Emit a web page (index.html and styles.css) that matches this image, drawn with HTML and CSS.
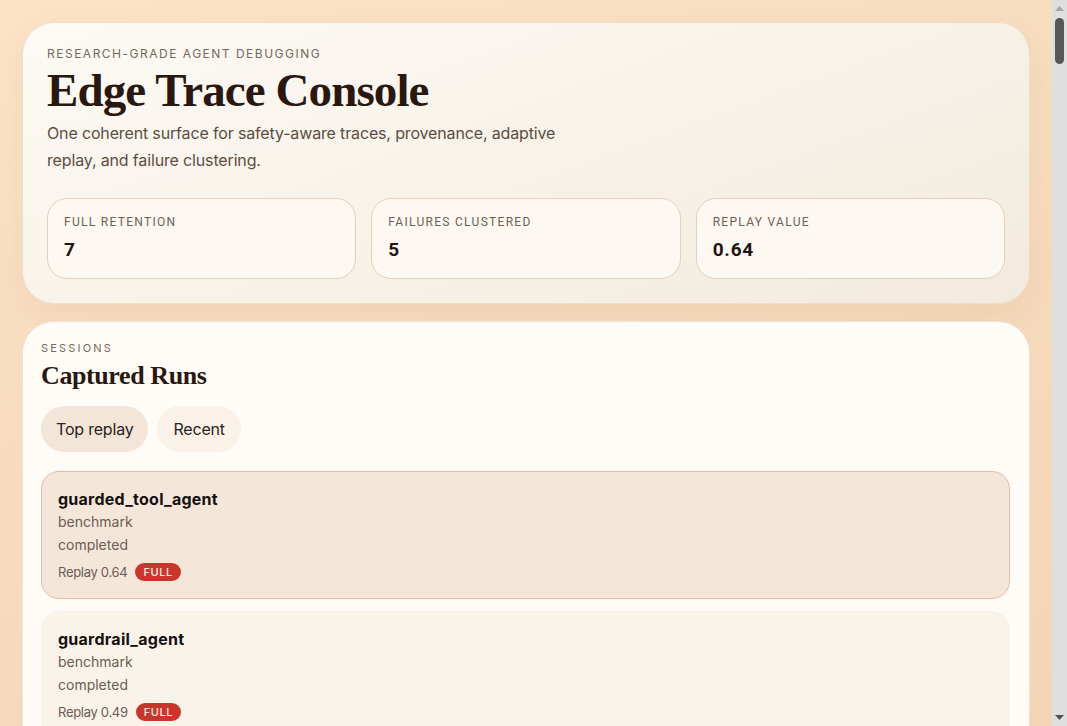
FILE: index.html
```html
<!DOCTYPE html>
<html lang="en">
<head>
<meta charset="utf-8">
<title>Edge Trace Console</title>
<link rel="stylesheet" href="styles.css">
</head>
<body>
<main class="page">
  <section class="hero">
    <p class="eyebrow">Research-grade agent debugging</p>
    <h1 class="title">Edge Trace Console</h1>
    <p class="lede">One coherent surface for safety-aware traces, provenance, adaptive replay, and failure clustering.</p>
    <div class="stats">
      <div class="stat"><span class="stat-label">Full retention</span><span class="stat-value">7</span></div>
      <div class="stat"><span class="stat-label">Failures clustered</span><span class="stat-value">5</span></div>
      <div class="stat"><span class="stat-label">Replay value</span><span class="stat-value">0.64</span></div>
    </div>
  </section>

  <section class="panel">
    <p class="eyebrow small">Sessions</p>
    <h2 class="panel-title">Captured Runs</h2>
    <div class="tabs">
      <button class="tab active">Top replay</button>
      <button class="tab">Recent</button>
    </div>
    <div class="runs">
      <article class="run selected"><h3 class="run-name">guarded_tool_agent</h3><p class="run-meta">benchmark</p><p class="run-meta">completed</p><div class="run-foot"><span>Replay 0.64</span><span class="badge">FULL</span></div></article>
      <article class="run"><h3 class="run-name">guardrail_agent</h3><p class="run-meta">benchmark</p><p class="run-meta">completed</p><div class="run-foot"><span>Replay 0.49</span><span class="badge">FULL</span></div></article>
      <article class="run"><h3 class="run-name">planner_agent</h3><p class="run-meta">benchmark</p><p class="run-meta">failed</p><div class="run-foot"><span>Replay 0.47</span><span class="badge">FULL</span></div></article>
      <article class="run"><h3 class="run-name">retrieval_agent</h3><p class="run-meta">production</p><p class="run-meta">failed</p><div class="run-foot"><span>Replay 0.45</span><span class="badge">FULL</span></div></article>
      <article class="run"><h3 class="run-name">browser_agent</h3><p class="run-meta">benchmark</p><p class="run-meta">completed</p><div class="run-foot"><span>Replay 0.44</span><span class="badge">FULL</span></div></article>
      <article class="run"><h3 class="run-name">sql_agent</h3><p class="run-meta">production</p><p class="run-meta">failed</p><div class="run-foot"><span>Replay 0.42</span><span class="badge">FULL</span></div></article>
      <article class="run"><h3 class="run-name">code_review_agent</h3><p class="run-meta">benchmark</p><p class="run-meta">failed</p><div class="run-foot"><span>Replay 0.41</span><span class="badge">FULL</span></div></article>
    </div>
  </section>
</main>
<aside class="scrollbar" aria-hidden="true">
  <div class="sb-btn">
    <svg width="9" height="5" viewBox="0 0 9 5"><path d="M0 5 L4.5 0 L9 5 Z" fill="#a3a3a3"/></svg>
  </div>
  <div class="sb-track"><div class="sb-thumb"></div></div>
  <div class="sb-btn">
    <svg width="9" height="5" viewBox="0 0 9 5"><path d="M0 0 L9 0 L4.5 5 Z" fill="#505050"/></svg>
  </div>
</aside>
</body>
</html>
```

FILE: styles.css
```css
* { box-sizing: border-box; }

html, body {
  margin: 0;
  padding: 0;
  height: 100%;
  overflow: hidden;
}

body {
  display: flex;
  background: linear-gradient(160deg, #fde3c6 0%, #f7dcc0 40%, #f3d5b6 100%);
  font-family: Inter, "Noto Sans", sans-serif;
  color: #2a1d16;
}

.page {
  flex: 1;
  min-width: 0;
  height: 100vh;
  overflow-y: auto;
  padding: 22px;
  display: flex;
  flex-direction: column;
  gap: 17px;
}

.scrollbar {
  flex: none;
  width: 15px;
  height: 100vh;
  background: #dfdfdf;
  display: flex;
  flex-direction: column;
}

.sb-btn {
  flex: none;
  height: 17px;
  display: flex;
  align-items: center;
  justify-content: center;
}

.sb-track {
  flex: 1;
  padding: 1px 3px 0 3px;
}

.sb-thumb {
  width: 9px;
  height: 46px;
  border-radius: 5px;
  background: #575757;
}

.hero {
  flex: none;
  background: linear-gradient(160deg, #fdfaf5 0%, #f8f2e9 50%, #f2eadd 100%);
  border: 1px solid #ecdecb;
  border-radius: 32px;
  padding: 24px 24px 24px;
  box-shadow: 0 12px 30px rgba(150, 100, 50, 0.08);
}

.eyebrow {
  margin: 0;
  font-size: 12px;
  line-height: 14px;
  letter-spacing: 1.5px;
  text-transform: uppercase;
  color: #77685d;
}

.eyebrow.small {
  font-size: 11px;
  line-height: 16px;
  letter-spacing: 2.2px;
}

.title {
  margin: 4px 0 0;
  font-family: "Liberation Serif", "DejaVu Serif", serif;
  font-weight: 700;
  font-size: 47px;
  line-height: 50px;
  letter-spacing: -0.9px;
  color: #2a1810;
}

.lede {
  margin: 5px 0 0;
  max-width: 540px;
  font-size: 16px;
  line-height: 27px;
  letter-spacing: -0.15px;
  color: #5d4c42;
}

.stats {
  margin-top: 24px;
  display: grid;
  grid-template-columns: repeat(3, 1fr);
  gap: 15px;
}

.stat {
  display: flex;
  flex-direction: column;
  gap: 8px;
  padding: 16px 16px;
  border: 1px solid #e4cfb8;
  border-radius: 20px;
  background: #fdf8f2;
}

.stat-label {
  font-family: Roboto, "Liberation Sans", sans-serif;
  font-size: 12px;
  line-height: 15px;
  letter-spacing: 1.3px;
  text-transform: uppercase;
  color: #6f6056;
}

.stat-value {
  font-family: Roboto, "Liberation Sans", sans-serif;
  font-weight: 700;
  font-size: 19px;
  line-height: 24px;
  letter-spacing: 0.8px;
  color: #1e1410;
}

.panel {
  flex: none;
  background: #fffbf6;
  border: 1px solid #f0e2d2;
  border-radius: 32px;
  padding: 18px 19px 18px 18px;
}

.panel-title {
  margin: 6px 0 0;
  font-family: "Liberation Serif", "DejaVu Serif", serif;
  font-weight: 700;
  font-size: 26px;
  line-height: 28px;
  letter-spacing: -0.4px;
  color: #2a1810;
}

.tabs {
  margin-top: 16px;
  display: flex;
  gap: 9px;
}

.tab {
  font-family: Inter, "Noto Sans", sans-serif;
  font-size: 16px;
  line-height: 20px;
  letter-spacing: -0.2px;
  color: #2a2220;
  border: none;
  border-radius: 999px;
  padding: 13px 15px;
  background: #faf1e8;
  cursor: pointer;
}

.tab + .tab {
  padding: 13px 16px;
}

.tab.active {
  background: #f3e6d8;
}

.runs {
  margin-top: 19px;
  display: flex;
  flex-direction: column;
  gap: 12px;
}

.run {
  border: 1px solid #faf3ea;
  border-radius: 18px;
  background: #faf3ea;
  padding: 16px 16px;
}

.run.selected {
  background: #f4e7da;
  border-color: #e9bba4;
}

.run-name {
  margin: 0;
  font-size: 16px;
  line-height: 22px;
  font-weight: 700;
  letter-spacing: 0.25px;
  color: #141010;
}

.run-meta {
  margin: 0;
  font-size: 14px;
  line-height: 23px;
  color: #6c5c52;
}

.run-foot {
  margin-top: 6px;
  display: flex;
  align-items: center;
  gap: 8px;
  font-size: 13px;
  line-height: 20px;
  letter-spacing: -0.3px;
  color: #6c5c52;
}

.badge {
  display: inline-block;
  padding: 1px 8px;
  border-radius: 999px;
  background: #c9372c;
  color: #fbe8e2;
  font-size: 11px;
  line-height: 16px;
  letter-spacing: 0.6px;
  font-weight: 500;
}
```
